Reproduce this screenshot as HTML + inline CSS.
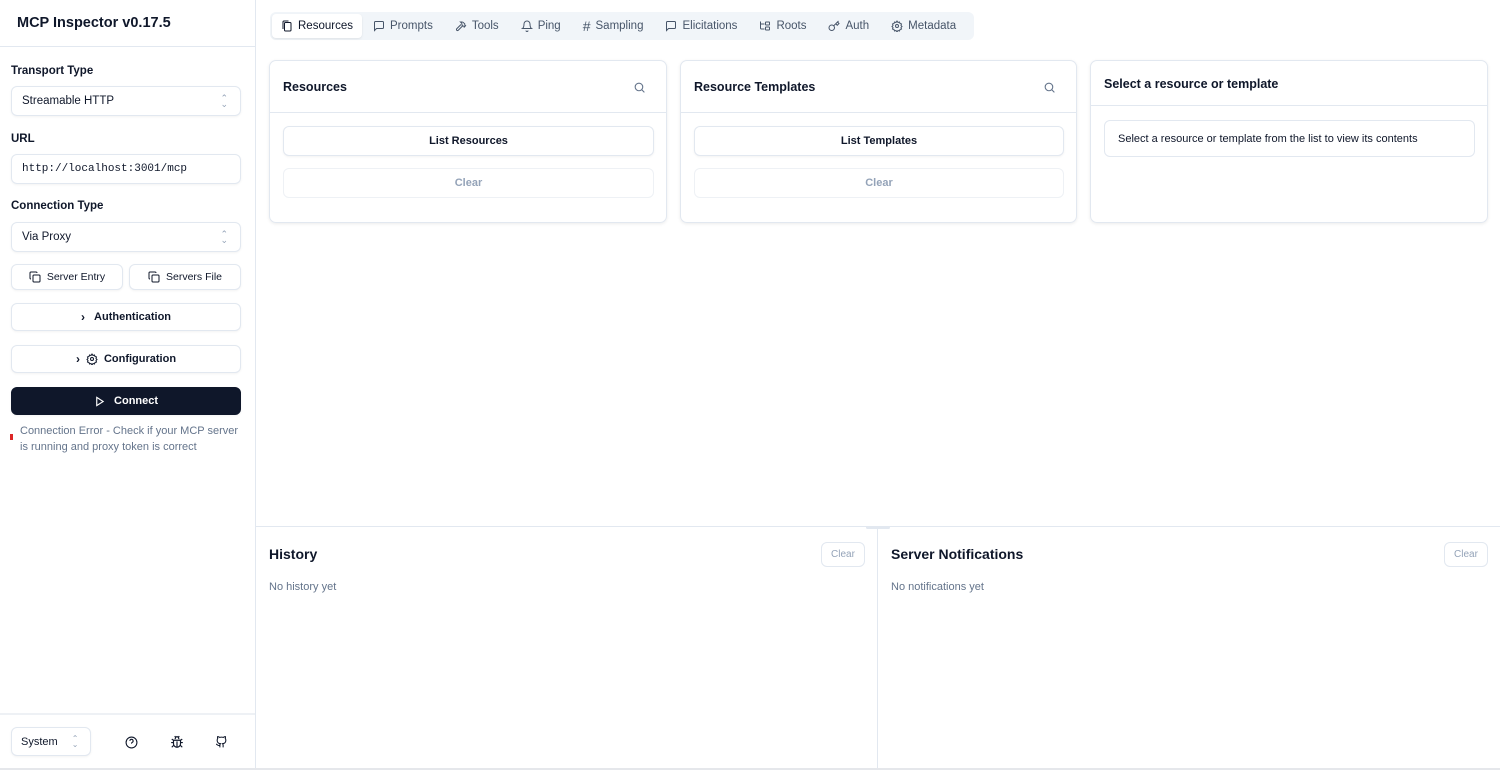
<!DOCTYPE html>
<html><head><meta charset="utf-8"><style>
*{box-sizing:border-box;margin:0;padding:0}
body{width:1500px;height:770px;overflow:hidden;font-family:"Liberation Sans",sans-serif;color:#0f172a;background:#fff;position:relative;font-size:12px}
.abs{position:absolute}
.side{left:0;top:0;width:256px;height:770px;border-right:1px solid #e2e8f0}
.inp{position:absolute;left:11px;width:230px;height:30px;border:1px solid #e2e8f0;border-radius:6px;font-size:11.5px;padding-left:10px;line-height:28px;box-shadow:0 1px 2px rgba(0,0,0,.05)}
.lbl{position:absolute;left:11px;font-size:11.5px;font-weight:bold}
.btn{position:absolute;border:1px solid #e2e8f0;border-radius:6px;font-size:11px;font-weight:bold;display:flex;align-items:center;justify-content:center;gap:6px;box-shadow:0 1px 2px rgba(0,0,0,.05);background:#fff}
.chev{position:absolute;right:12px;top:8px;color:#94a3b8;font-size:9px;line-height:6px}
.card{position:absolute;top:60px;height:163px;border:1px solid #e2e8f0;border-radius:7px;box-shadow:0 1px 3px rgba(0,0,0,.08)}
.card .t{position:absolute;left:13px;top:19px;font-size:12.5px;font-weight:bold}
.card .hl{position:absolute;left:0;right:0;top:51px;border-top:1px solid #e2e8f0}
svg{display:block}
.tab{display:flex;align-items:center;gap:5px;font-size:11.5px;color:#475569;padding:0 11px;height:24px}
</style></head><body>
<div class="abs side">
 <div class="abs" style="left:17px;top:15px;font-size:14.5px;font-weight:bold">MCP Inspector v0.17.5</div>
 <div class="abs" style="left:0;top:46px;width:255px;border-top:1px solid #e2e8f0"></div>
 <div class="lbl" style="top:65px">Transport Type</div>
 <div class="inp" style="top:86px">Streamable HTTP<div class="chev">⌃<br>⌄</div></div>
 <div class="lbl" style="top:133px">URL</div>
 <div class="inp" style="top:154px;font-family:'Liberation Mono',monospace;font-size:11px">http://localhost:3001/mcp</div>
 <div class="lbl" style="top:200px">Connection Type</div>
 <div class="inp" style="top:222px">Via Proxy<div class="chev">⌃<br>⌄</div></div>
 <div class="btn" style="left:11px;top:264px;width:112px;height:26px;font-weight:normal;font-size:10.5px"><svg width="12" height="12" viewBox="0 0 24 24" fill="none" stroke="#0f172a" stroke-width="2"><rect x="8" y="8" width="14" height="14" rx="2"/><path d="M4 16c-1 0-2-1-2-2V4c0-1 1-2 2-2h10c1 0 2 1 2 2"/></svg>Server Entry</div>
 <div class="btn" style="left:129px;top:264px;width:112px;height:26px;font-weight:normal;font-size:10.5px"><svg width="12" height="12" viewBox="0 0 24 24" fill="none" stroke="#0f172a" stroke-width="2"><rect x="8" y="8" width="14" height="14" rx="2"/><path d="M4 16c-1 0-2-1-2-2V4c0-1 1-2 2-2h10c1 0 2 1 2 2"/></svg>Servers File</div>
 <div class="btn" style="left:11px;top:303px;width:230px;height:28px"><span style="font-size:12px">›</span>&nbsp;Authentication</div>
 <div class="btn" style="left:11px;top:345px;width:230px;height:28px"><span style="font-size:12px">›</span><svg width="12" height="12" viewBox="0 0 24 24" fill="none" stroke="#0f172a" stroke-width="2"><circle cx="12" cy="12" r="3"/><path d="M12 2l2 3 3-1 1 3 3 1-1 3 2 2-2 2 1 3-3 1-1 3-3-1-2 3-2-3-3 1-1-3-3-1 1-3-2-2 2-2-1-3 3-1 1-3 3 1z"/></svg>Configuration</div>
 <div class="btn" style="left:11px;top:387px;width:230px;height:28px;background:#0f172a;color:#fff;border-color:#0f172a"><svg width="11" height="11" viewBox="0 0 24 24" fill="none" stroke="#fff" stroke-width="2.5"><path d="M6 3l14 9-14 9z"/></svg>&nbsp;Connect</div>
 <div class="abs" style="left:10px;top:434px;width:3px;height:6px;background:#dc2626"></div>
 <div class="abs" style="left:20px;top:423px;font-size:11px;color:#64748b;line-height:16px;width:222px">Connection Error - Check if your MCP server is running and proxy token is correct</div>
 <div class="abs" style="left:0;top:713px;width:255px;border-top:2px solid #eef1f5"></div>
 <div class="btn" style="left:11px;top:727px;width:80px;height:29px;font-weight:normal;justify-content:flex-start;padding-left:9px;font-size:11px">System<span style="color:#94a3b8;font-size:8px;margin-left:8px;line-height:6px">⌃<br>⌄</span></div>
 <svg class="abs" style="left:125px;top:736px" width="13" height="13" viewBox="0 0 24 24" fill="none" stroke="#0f172a" stroke-width="2"><circle cx="12" cy="12" r="10"/><path d="M9 9a3 3 0 1 1 4 3c-1 .5-1 1-1 2M12 17h.01"/></svg>
 <svg class="abs" style="left:170px;top:735px" width="14" height="14" viewBox="0 0 24 24" fill="none" stroke="#0f172a" stroke-width="2"><path d="M8 2l2 2M16 2l-2 2M9 7V6a3 3 0 0 1 6 0v1M6 9h12v6a6 6 0 0 1-12 0zM12 20v-9M6 13H2M22 13h-4M3 7l3 2M21 7l-3 2M3 21l3-3M21 21l-3-3"/></svg>
 <svg class="abs" style="left:215px;top:735px" width="13" height="14" viewBox="0 0 24 24" fill="none" stroke="#0f172a" stroke-width="2"><path d="M15 22v-4a5 5 0 0 0-1-3c3 0 6-2 6-6a5 5 0 0 0-1-3.5 5 5 0 0 0 0-3.5s-1 0-3.5 1.5a12 12 0 0 0-7 0C6 2 5 2 5 2a5 5 0 0 0 0 3.5A5 5 0 0 0 4 9c0 4 3 6 6 6a5 5 0 0 0-1 3v4M9 18c-4 2-5-2-7-2"/></svg>
</div>

<div class="abs" style="left:270px;top:12px;width:704px;height:28px;background:#f1f5f9;border-radius:6px;display:flex;align-items:center;padding-left:2px">
 <div class="tab" style="background:#fff;color:#0f172a;border-radius:4px;box-shadow:0 1px 2px rgba(0,0,0,.08);width:90px;padding:0 9px"><svg width="12" height="12" viewBox="0 0 24 24" fill="none" stroke="#0f172a" stroke-width="2"><rect x="7" y="5" width="13" height="17" rx="2"/><path d="M4 18V4c0-1 1-2 2-2h9"/></svg>Resources</div>
 <div class="tab"><svg width="12" height="12" viewBox="0 0 24 24" fill="none" stroke="#475569" stroke-width="2"><path d="M21 15a2 2 0 0 1-2 2H7l-4 4V5a2 2 0 0 1 2-2h14a2 2 0 0 1 2 2z"/></svg>Prompts</div>
 <div class="tab"><svg width="12" height="12" viewBox="0 0 24 24" fill="none" stroke="#475569" stroke-width="2"><path d="M15 12l-8.5 8.5a2 2 0 0 1-3-3L12 9M17.6 15L22 10.6M20.9 11.7l-1.3-1.3a2 2 0 0 1 0-1.4V7.9L17.3 5.6A5 5 0 0 0 13.8 4H11l1 .9a5 5 0 0 1 2 3.9v1.5l2 2h1.2a2 2 0 0 1 1.4.6l1.3 1.3"/></svg>Tools</div>
 <div class="tab"><svg width="12" height="12" viewBox="0 0 24 24" fill="none" stroke="#475569" stroke-width="2"><path d="M6 8a6 6 0 0 1 12 0c0 7 3 9 3 9H3s3-2 3-9M10 21a2 2 0 0 0 4 0"/></svg>Ping</div>
 <div class="tab"><span style="font-size:14px">#</span>Sampling</div>
 <div class="tab"><svg width="12" height="12" viewBox="0 0 24 24" fill="none" stroke="#475569" stroke-width="2"><path d="M21 15a2 2 0 0 1-2 2H7l-4 4V5a2 2 0 0 1 2-2h14a2 2 0 0 1 2 2z"/></svg>Elicitations</div>
 <div class="tab"><svg width="12" height="12" viewBox="0 0 24 24" fill="none" stroke="#475569" stroke-width="2"><path d="M3 3v13a2 2 0 0 0 2 2h6M3 8h8"/><rect x="13" y="4" width="8" height="6" rx="1"/><rect x="13" y="14" width="8" height="6" rx="1"/></svg>Roots</div>
 <div class="tab"><svg width="12" height="12" viewBox="0 0 24 24" fill="none" stroke="#475569" stroke-width="2"><circle cx="7.5" cy="15.5" r="5.5"/><path d="M21 2l-9.6 9.6M15.5 7.5l3 3L22 7l-3-3"/></svg>Auth</div>
 <div class="tab"><svg width="12" height="12" viewBox="0 0 24 24" fill="none" stroke="#475569" stroke-width="2"><circle cx="12" cy="12" r="3"/><path d="M12 2l2 3 3-1 1 3 3 1-1 3 2 2-2 2 1 3-3 1-1 3-3-1-2 3-2-3-3 1-1-3-3-1 1-3-2-2 2-2-1-3 3-1 1-3 3 1z"/></svg>Metadata</div>
</div>

<div class="card" style="left:269px;width:398px"><div class="t">Resources</div>
 <svg class="abs" style="right:20px;top:20px" width="13" height="13" viewBox="0 0 24 24" fill="none" stroke="#64748b" stroke-width="2"><circle cx="11" cy="11" r="7"/><path d="M21 21l-5-5"/></svg>
 <div class="hl"></div>
 <div class="btn" style="left:13px;top:65px;width:371px;height:30px">List Resources</div>
 <div class="btn" style="left:13px;top:107px;width:371px;height:30px;color:#94a3b8;box-shadow:none;border-color:#eef1f5">Clear</div>
</div>
<div class="card" style="left:680px;width:397px"><div class="t">Resource Templates</div>
 <svg class="abs" style="right:20px;top:20px" width="13" height="13" viewBox="0 0 24 24" fill="none" stroke="#64748b" stroke-width="2"><circle cx="11" cy="11" r="7"/><path d="M21 21l-5-5"/></svg>
 <div class="hl"></div>
 <div class="btn" style="left:13px;top:65px;width:370px;height:30px">List Templates</div>
 <div class="btn" style="left:13px;top:107px;width:370px;height:30px;color:#94a3b8;box-shadow:none;border-color:#eef1f5">Clear</div>
</div>
<div class="card" style="left:1090px;width:398px"><div class="t" style="top:16px">Select a resource or template</div>
 <div class="hl" style="top:44px"></div>
 <div class="abs" style="left:13px;top:59px;width:371px;height:37px;border:1px solid #e2e8f0;border-radius:6px;font-size:11px;padding:12px 13px">Select a resource or template from the list to view its contents</div>
</div>

<div class="abs" style="left:256px;top:526px;width:1244px;border-top:1px solid #e2e8f0"></div>
<div class="abs" style="left:866px;top:526px;width:24px;height:3px;background:#e2e8f0;border-radius:2px"></div>
<div class="abs" style="left:877px;top:527px;height:243px;border-left:1px solid #e2e8f0"></div>
<div class="abs" style="left:269px;top:546px;font-size:14px;font-weight:bold">History</div>
<div class="btn" style="left:821px;top:542px;width:44px;height:25px;font-weight:normal;font-size:10px;color:#94a3b8;box-shadow:none">Clear</div>
<div class="abs" style="left:269px;top:581px;font-size:11px;color:#64748b">No history yet</div>
<div class="abs" style="left:891px;top:546px;font-size:14px;font-weight:bold">Server Notifications</div>
<div class="btn" style="left:1444px;top:542px;width:44px;height:25px;font-weight:normal;font-size:10px;color:#94a3b8;box-shadow:none">Clear</div>
<div class="abs" style="left:891px;top:581px;font-size:11px;color:#64748b">No notifications yet</div>
<div class="abs" style="left:0;top:768px;width:1500px;border-top:2px solid #e5e7eb"></div>
</body></html>
